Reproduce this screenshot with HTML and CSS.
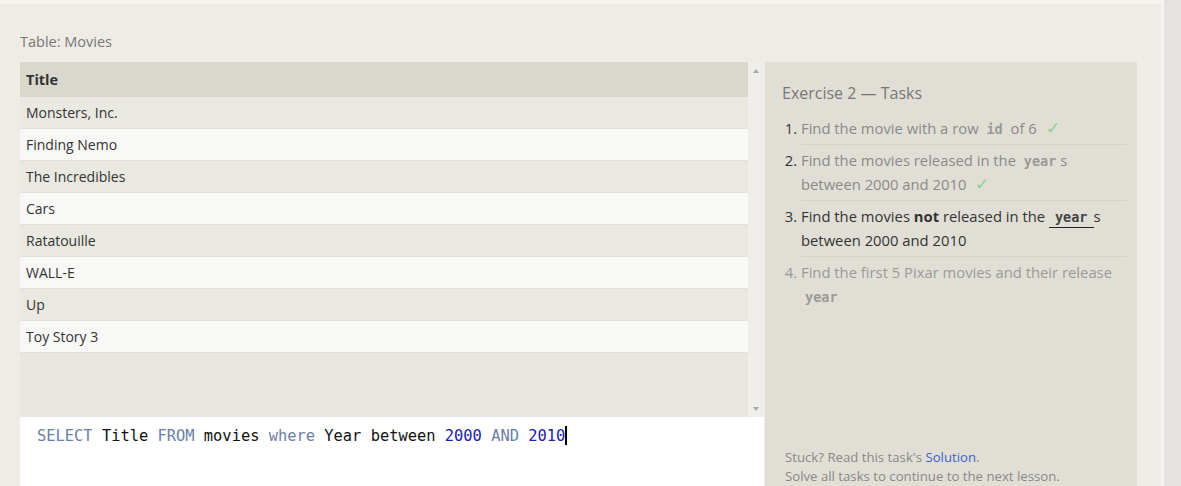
FILE: index.html
```html
<!DOCTYPE html>
<html>
<head>
<meta charset="utf-8">
<link rel="stylesheet" href="styles.css">
</head>
<body>
<div class="page">
  <div class="caption">Table: Movies</div>
  <div class="workspace">
    <div class="left">
      <div class="table-area">
        <div class="table">
          <div class="th">Title</div>
          <div class="tr odd">Monsters, Inc.</div>
          <div class="tr even">Finding Nemo</div>
          <div class="tr odd">The Incredibles</div>
          <div class="tr even">Cars</div>
          <div class="tr odd">Ratatouille</div>
          <div class="tr even">WALL-E</div>
          <div class="tr odd">Up</div>
          <div class="tr even">Toy Story 3</div>
        </div>
        <div class="scrollbar">
          <span class="arrow up"></span>
          <span class="arrow down"></span>
        </div>
      </div>
      <div class="editor"><span class="code"><span class="kw">SELECT</span> Title <span class="kw">FROM</span> movies <span class="kw">where</span> Year between <span class="num">2000</span> <span class="kw">AND</span> <span class="num">2010</span></span><span class="cursor"></span></div>
    </div>
    <div class="tasks">
      <div class="tasks-title">Exercise 2 — Tasks</div>
      <ol class="task-list">
        <li class="done">Find the movie with a row <code>id</code> of 6 <span class="check">✓</span></li>
        <li class="done">Find the movies released in the <code>year</code>s between 2000 and 2010 <span class="check">✓</span></li>
        <li class="active">Find the movies <b>not</b> released in the <code class="hl">year</code>s between 2000 and 2010</li>
        <li class="todo">Find the first 5 Pixar movies and their release <code>year</code></li>
      </ol>
      <div class="footer">
        <div>Stuck? Read this task's <a class="link">Solution</a>.</div>
        <div>Solve all tasks to continue to the next lesson.</div>
      </div>
    </div>
  </div>
</div>
</body>
</html>
```

FILE: styles.css
```css
html, body {
  margin: 0;
  padding: 0;
  height: 100%;
  overflow: hidden;
}
body {
  background: #e5e2df;
  font-family: "Open Sans", "Noto Sans", sans-serif;
}
.page {
  width: 1164px;
  height: 100%;
  box-sizing: border-box;
  background: #efece5;
  border-top: 4px solid #f7f5f1;
  border-right: 3px solid #f7f5f1;
  padding: 28px 24px 0 20px;
}
.caption {
  font-size: 14.5px;
  line-height: 20px;
  color: #777;
  height: 30px;
}
.workspace {
  display: flex;
  gap: 1px;
  height: 440px;
}
.left {
  width: 744px;
  flex: none;
  display: flex;
  flex-direction: column;
}
.table-area {
  display: flex;
  height: 355px;
  background: #e8e7e0;
}
.table {
  width: 728px;
}
.th {
  height: 35px;
  line-height: 35px;
  background: #d9d8cc;
  font-weight: 700;
  font-size: 14.5px;
  color: #333;
  padding-left: 6px;
}
.tr {
  height: 31px;
  line-height: 31px;
  border-bottom: 1px solid #e0dfd9;
  font-size: 14px;
  color: #333;
  padding-left: 6px;
}
.tr.odd { background: #e9e8e1; }
.tr.even { background: #f8f8f7; }
.scrollbar {
  width: 16px;
  background: #efeeeb;
  display: flex;
  flex-direction: column;
  justify-content: space-between;
  align-items: center;
  padding: 7px 0 6px;
  box-sizing: border-box;
}
.arrow {
  width: 0;
  height: 0;
  border-left: 3.5px solid transparent;
  border-right: 3.5px solid transparent;
}
.arrow.up { border-bottom: 4px solid #a8a8a8; }
.arrow.down { border-top: 4px solid #a8a8a8; }
.editor {
  flex: 1;
  background: #fff;
  padding: 9px 0 0 17px;
  font-family: "DejaVu Sans Mono", "Liberation Mono", monospace;
  font-size: 15.4px;
  line-height: 20px;
  color: #111;
  white-space: pre;
}
.kw { color: #6b7fa4; }
.num { color: #2020a8; }
.cursor {
  display: inline-block;
  width: 2px;
  height: 19px;
  background: #000;
  vertical-align: -4px;
}
.tasks {
  width: 372px;
  flex: none;
  background: #e1dfd5;
  box-sizing: border-box;
  padding: 20px 10px 16px 17px;
  display: flex;
  flex-direction: column;
}
.tasks-title {
  font-size: 16px;
  line-height: 22px;
  color: #777;
  margin-bottom: 9px;
}
.task-list {
  margin: 0;
  padding: 0 0 0 19px;
  font-size: 14.8px;
  line-height: 24px;
}
.task-list li {
  padding: 3px 0 4px;
  border-bottom: 1px solid #d5d2c7;
}
.task-list li:last-child { border-bottom: none; }
.task-list li::marker { color: #333; }
.task-list li.todo::marker { color: #999; }
.done { color: #8a8a8a; }
.active { color: #333; }
.todo { color: #999; }
.task-list code {
  font-family: "DejaVu Sans Mono", "Liberation Mono", monospace;
  font-weight: 700;
  font-size: 13.5px;
  line-height: 1;
  padding: 0 4px;
}
.done code, .todo code { color: #999; }
.active code.hl {
  color: #444;
  border-bottom: 1.5px solid #222;
  padding: 0 6px 2px;
}
.check {
  color: #8fcf8f;
  font-size: 17px;
  line-height: 1;
  margin-left: 5px;
}
.footer {
  margin-top: auto;
  font-size: 13.2px;
  line-height: 19px;
  color: #888;
  padding-left: 3px;
}
.link { color: #3b5fc9; }
```
